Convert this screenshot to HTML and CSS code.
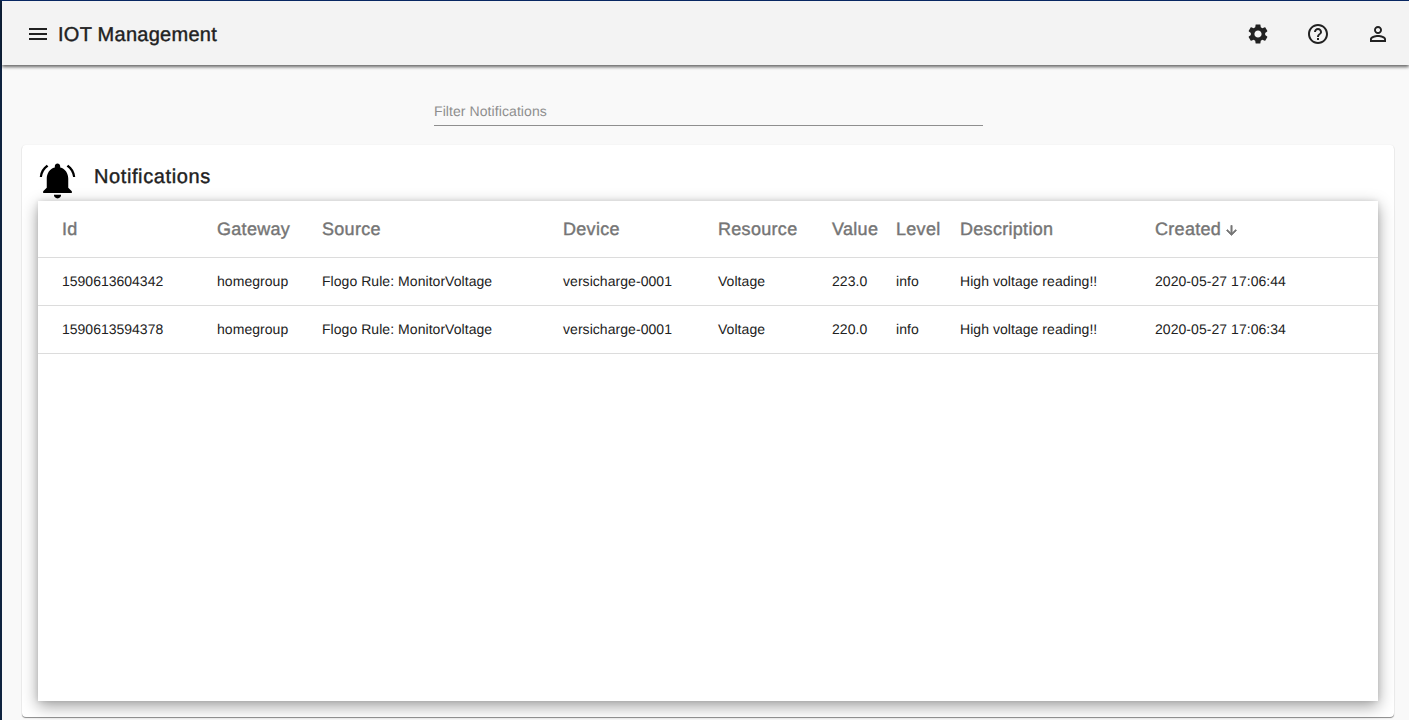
FILE: index.html
```html
<!DOCTYPE html>
<html lang="en">
<head>
<meta charset="utf-8">
<title>IOT Management</title>
<link rel="stylesheet" href="styles.css">
</head>
<body>
<div class="frame">
  <header class="toolbar">
    <svg class="icon menu-icon" viewBox="0 0 24 24"><path d="M3 18h18v-2H3v2zm0-5h18v-2H3v2zm0-7v2h18V6H3z"/></svg>
    <span class="app-title">IOT Management</span>
    <span class="spacer"></span>
    <span class="tool"><svg class="icon" viewBox="0 0 24 24"><path d="M19.14 12.94c.04-.3.06-.61.06-.94 0-.32-.02-.64-.07-.94l2.03-1.58c.18-.14.23-.41.12-.61l-1.92-3.32c-.12-.22-.37-.29-.59-.22l-2.39.96c-.5-.38-1.03-.7-1.62-.94l-.36-2.54c-.04-.24-.24-.41-.48-.41h-3.84c-.24 0-.43.17-.47.41l-.36 2.54c-.59.24-1.13.57-1.62.94l-2.39-.96c-.22-.08-.47 0-.59.22L2.74 8.87c-.12.21-.08.47.12.61l2.03 1.58c-.05.3-.09.63-.09.94s.02.64.07.94l-2.03 1.58c-.18.14-.23.41-.12.61l1.92 3.32c.12.22.37.29.59.22l2.39-.96c.5.38 1.03.7 1.62.94l.36 2.54c.05.24.24.41.48.41h3.84c.24 0 .44-.17.47-.41l.36-2.54c.59-.24 1.13-.56 1.62-.94l2.39.96c.22.08.47 0 .59-.22l1.92-3.32c.12-.22.07-.47-.12-.61l-2.01-1.58zM12 15.6c-1.98 0-3.6-1.62-3.6-3.6s1.62-3.6 3.6-3.6 3.6 1.62 3.6 3.6-1.62 3.6-3.6 3.6z"/></svg></span>
    <span class="tool"><svg class="icon" viewBox="0 0 24 24"><path d="M11 18h2v-2h-2v2zm1-16C6.48 2 2 6.48 2 12s4.48 10 10 10 10-4.48 10-10S17.52 2 12 2zm0 18c-4.41 0-8-3.59-8-8s3.59-8 8-8 8 3.59 8 8-3.59 8-8 8zm0-14c-2.21 0-4 1.79-4 4h2c0-1.1.9-2 2-2s2 .9 2 2c0 2-3 1.75-3 5h2c0-2.25 3-2.5 3-5 0-2.21-1.79-4-4-4z"/></svg></span>
    <span class="tool"><svg class="icon" viewBox="0 0 24 24"><path d="M12 5.9c1.16 0 2.1.94 2.1 2.1s-.94 2.1-2.1 2.1S9.9 9.16 9.9 8s.94-2.1 2.1-2.1m0 9c2.97 0 6.1 1.46 6.1 2.1v1.1H5.9V17c0-.64 3.13-2.1 6.1-2.1M12 4C9.79 4 8 5.79 8 8s1.79 4 4 4 4-1.79 4-4-1.79-4-4-4zm0 9c-2.67 0-8 1.34-8 4v3h16v-3c0-2.66-5.33-4-8-4z"/></svg></span>
  </header>
  <main class="content">
    <div class="filter"><span class="filter-label">Filter Notifications</span></div>
    <section class="card">
      <div class="card-header">
        <svg class="bell" viewBox="0 0 24 24"><path d="M6 3.2l.9 1C4.9 5.6 3.6 7.6 3.3 10.1L2.1 10C2.3 7.2 3.7 4.8 6 3.2zM18 3.2l-.9 1c2 1.4 3.3 3.4 3.6 5.9l1.2-.1C21.7 7.2 20.3 4.8 18 3.2zM18 11c0-3.07-1.64-5.64-4.5-6.32V4c0-.83-.67-1.5-1.5-1.5s-1.5.67-1.5 1.5v.68C7.63 5.36 6 7.92 6 11v5l-2 2v1h16v-1l-2-2v-5zm-6 11c.14 0 .27-.01.4-.04.65-.14 1.18-.58 1.44-1.18.1-.24.15-.5.15-.78h-4c.01 1.1.9 2 2.01 2z"/></svg>
        <h2 class="card-title">Notifications</h2>
      </div>
      <div class="table-wrap">
        <table class="grid">
          <colgroup>
            <col class="c-id"><col class="c-gateway"><col class="c-source"><col class="c-device"><col class="c-resource"><col class="c-value"><col class="c-level"><col class="c-desc"><col class="c-created">
          </colgroup>
          <thead>
            <tr>
              <th>Id</th><th>Gateway</th><th>Source</th><th>Device</th><th>Resource</th><th>Value</th><th>Level</th><th>Description</th>
              <th>Created <svg class="sort" viewBox="0 0 24 24"><path d="M20 12l-1.41-1.41L13 16.17V4h-2v12.17l-5.58-5.59L4 12l8 8 8-8z"/></svg></th>
            </tr>
          </thead>
          <tbody>
            <tr><td>1590613604342</td><td>homegroup</td><td>Flogo Rule: MonitorVoltage</td><td>versicharge-0001</td><td>Voltage</td><td>223.0</td><td>info</td><td>High voltage reading!!</td><td>2020-05-27 17:06:44</td></tr>
            <tr><td>1590613594378</td><td>homegroup</td><td>Flogo Rule: MonitorVoltage</td><td>versicharge-0001</td><td>Voltage</td><td>220.0</td><td>info</td><td>High voltage reading!!</td><td>2020-05-27 17:06:34</td></tr>
          </tbody>
        </table>
      </div>
    </section>
  </main>
</div>
</body>
</html>
```
FILE: styles.css
```css
* { box-sizing: border-box; }
html, body { margin: 0; height: 100%; overflow: hidden; }
body {
  font-family: "Liberation Sans", Arial, sans-serif;
  font-size: 14px;
  color: #212121;
  background: #f9f9f9;
  text-rendering: geometricPrecision;
}
.frame {
  height: 720px;
  border-top: 1px solid #0a2a66;
  border-left: 2px solid #0f2340;
  display: flex;
  flex-direction: column;
}
.toolbar {
  flex: none;
  height: 64px;
  display: flex;
  align-items: center;
  padding: 2px 1px 0 24px;
  background: #f3f3f3;
  box-shadow: 0 2px 4px -1px rgba(0,0,0,.2), 0 2px 3px 0 rgba(0,0,0,.5);
  position: relative;
  z-index: 2;
}
.icon { width: 24px; height: 24px; fill: #212121; display: block; }
.app-title {
  margin: 2px 0 0 8px;
  font-size: 20px;
  letter-spacing: .27px;
  -webkit-text-stroke: .4px #212121;
}
.spacer { flex: 1; }
.tool { width: 60px; display: flex; justify-content: center; }
.content { flex: 1; min-height: 0; display: flex; flex-direction: column; padding: 0 15px 3px 20px; }
.filter {
  flex: none;
  width: 549px;
  height: 37px;
  margin: 24px 0 19px 412px;
  border-bottom: 1px solid #8f8f8f;
  display: flex;
  align-items: center;
  padding-top: 7px;
}
.filter-label { color: #8e8e8e; font-size: 14px; letter-spacing: .08px; }
.card {
  flex: 1;
  min-height: 0;
  display: flex;
  flex-direction: column;
  padding: 0 16px 16px;
  background: #fff;
  border-radius: 4px;
  box-shadow: 0 1px 1px rgba(0,0,0,.45), 0 0 2px rgba(0,0,0,.06);
}
.card-header { flex: none; height: 56px; display: flex; align-items: flex-start; }
.bell { width: 43px; height: 43px; display: block; margin: 14px 0 0 -2px; fill: #000; flex: none; }
.card-title {
  margin: 21px 0 0 15px;
  font-size: 20px;
  line-height: 23px;
  font-weight: 400;
  letter-spacing: .6px;
  -webkit-text-stroke: .4px #212121;
}
.table-wrap {
  flex: 1;
  min-height: 0;
  background: #fff;
  box-shadow: 0 5px 15px rgba(0,0,0,.38), 0 0 5px rgba(0,0,0,.1);
  position: relative;
}
.grid { width: 100%; table-layout: fixed; border-collapse: collapse; }
.c-id { width: 179px; } .c-gateway { width: 105px; } .c-source { width: 241px; }
.c-device { width: 155px; } .c-resource { width: 114px; } .c-value { width: 64px; }
.c-level { width: 64px; } .c-desc { width: 195px; }
.grid th, .grid td { text-align: left; padding: 0 0 0 24px; white-space: nowrap; border-bottom: 1px solid #dcdcdc; }
.grid th:not(:first-child), .grid td:not(:first-child) { padding-left: 0; }
.grid th {
  height: 56px;
  padding-top: 1px;
  font-size: 18px;
  font-weight: 400;
  color: #757575;
  letter-spacing: .3px;
  -webkit-text-stroke: .4px #757575;
}
.grid td { height: 48px; color: #212121; letter-spacing: .05px; }
.grid td:first-child { letter-spacing: 0; }
.sort { width: 15px; height: 15px; fill: #757575; stroke: #757575; stroke-width: 1.2; vertical-align: -3px; margin-left: -2px; }
```
